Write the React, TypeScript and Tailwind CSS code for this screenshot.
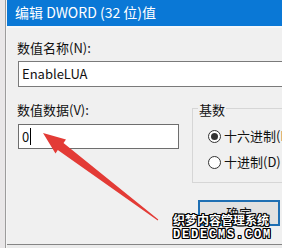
import React from 'react'

const cjk = { fontFamily: '"Noto Sans CJK SC", "Noto Sans", sans-serif' }

function Radio({ checked, label }: { checked?: boolean; label: string }) {
  return (
    <div className="flex items-center h-[18px] whitespace-nowrap">
      <span className="w-[13px] h-[13px] rounded-full border border-[#333] bg-white flex items-center justify-center shrink-0">
        {checked ? <span className="w-[7px] h-[7px] rounded-full bg-[#333]" /> : null}
      </span>
      <span className="ml-[3px] text-[13px] leading-[18px] text-[#111]">{label}</span>
    </div>
  )
}

export default function App() {
  return (
    <div className="w-[282px] h-[248px] overflow-hidden relative flex bg-[#f0f0f0]" style={cjk}>
      {/* window edge behind the dialog */}
      <div className="w-[6px] shrink-0 bg-[#e9e7e8] border-r border-[#9c9c9c]" />
      <div className="w-[1px] shrink-0 bg-[#f6f6f6]" />

      <div className="flex-1 min-w-0 flex flex-col">
        <div className="h-[26px] shrink-0 bg-[#0a78d6] flex items-center pl-[8px] pb-[2px]">
          <span className="text-white text-[14px] leading-[18px] whitespace-nowrap">编辑 DWORD (32 位)值</span>
        </div>
        <div className="h-[2px] shrink-0 bg-[#f4f7fa]" />

        <div className="flex-1 min-h-0 overflow-hidden pl-[10px] flex flex-col">
          <div className="mt-[11px] h-[18px] text-[13px] leading-[18px] text-[#111] whitespace-nowrap">数值名称(N):</div>
          <div className="mt-[4px] ml-[1px] w-[300px] h-[26px] shrink-0 bg-white border border-[#7a7a7a] flex items-center pl-[3px]">
            <span className="text-[13px] leading-[18px] text-[#111]">EnableLUA</span>
          </div>

          <div className="mt-[14px] flex">
            <div className="w-[162px] shrink-0 flex flex-col">
              <div className="h-[18px] text-[13px] leading-[18px] text-[#111] whitespace-nowrap">数值数据(V):</div>
              <div className="mt-[5px] ml-[1px] w-[161px] h-[25px] bg-white border border-[#6e6e6e] flex items-center pl-[3px]">
                <span className="text-[13px] leading-[18px] text-[#111]">0</span>
                <span className="w-[1px] h-[17px] bg-black ml-[1px]" />
              </div>
            </div>

            <div className="ml-[13px] w-[110px] shrink-0 flex flex-col">
              <div className="relative mt-[7px] h-[75px] border border-[#d6d6d6] pl-[15px] pt-[18px] flex flex-col gap-[8px]">
                <span className="absolute -top-[8px] left-[5px] px-[1px] bg-[#f0f0f0] text-[13px] leading-[18px] text-[#111]">基数</span>
                <Radio checked label="十六进制(H)" />
                <Radio label="十进制(D)" />
              </div>
              <div className="mt-[17px] ml-[6px] w-[82px] h-[26px] border-2 border-[#1f6fb3] bg-[#e1e1e1] flex items-center justify-center">
                <span className="text-[13px] leading-[18px] text-[#111]">确定</span>
              </div>
            </div>
          </div>
        </div>

        <div className="h-[4px] shrink-0 border-t border-[#858585] bg-[#ebebeb]" />
      </div>

      {/* red annotation arrow */}
      <svg className="absolute left-0 top-0" width="282" height="248" viewBox="0 0 282 248">
        <polygon
          points="43,133 66,139.5 63.5,143 158.3,219.6 157.7,220.4 57.8,150 55.5,153.5"
          fill="#e33b36"
        />
      </svg>

      {/* site watermark */}
      <div className="absolute left-[173px] top-[213px] flex flex-col items-start">
        <span
          className="text-[12px] leading-[14px] font-bold text-white whitespace-nowrap [text-shadow:1px_0_0_#000,-1px_0_0_#000,0_1px_0_#000,0_-1px_0_#000,1px_1px_0_#000,-1px_-1px_0_#000,1px_-1px_0_#000,-1px_1px_0_#000]"
        >
          织梦内容管理系统
        </span>
        <span
          className="mt-[2px] text-[12px] leading-[12px] font-bold text-white tracking-[1.8px] whitespace-nowrap [font-family:'Liberation_Mono',monospace] [text-shadow:1px_0_0_#000,-1px_0_0_#000,0_1px_0_#000,0_-1px_0_#000,1px_1px_0_#000,-1px_-1px_0_#000,1px_-1px_0_#000,-1px_1px_0_#000]"
        >
          DEDECMS.COM
        </span>
      </div>
    </div>
  )
}
